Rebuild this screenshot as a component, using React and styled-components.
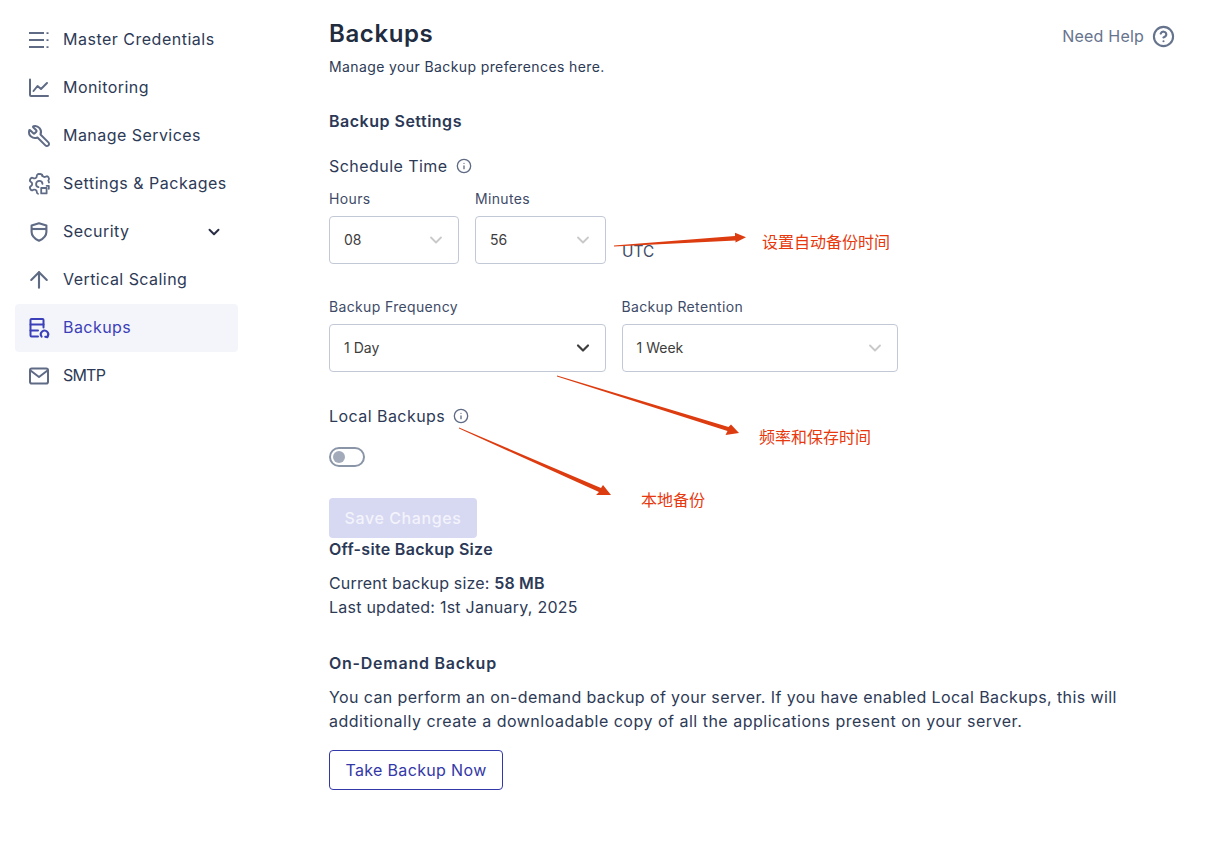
import React from "react";
import styled, { createGlobalStyle } from "styled-components";
import { Wrench, ArrowUp, Info, CircleHelp, ChevronDown } from "lucide-react";

const Global = createGlobalStyle`
  html, body { margin: 0; padding: 0; background: #fff; }
  body { font-family: Inter, "Open Sans", sans-serif; color: #2d3a56; overflow: hidden; }
  * { box-sizing: border-box; }
`;
const Page = styled.div`
  position: relative; display: flex; width: 1206px; height: 846px; overflow: hidden;
`;
const Sidebar = styled.nav`
  width: 329px; flex: none; padding: 16px 91px 0 15px; display: flex; flex-direction: column;
`;
const NavItem = styled.div`
  height: 48px; display: flex; align-items: center; gap: 14px; padding: 0 15px 0 14px; border-radius: 4px;
  font-size: 16px; letter-spacing: ${p => p.$ls ?? 0.45}px;
  background: ${p => (p.$active ? "#f4f5fb" : "transparent")};
  color: ${p => (p.$active ? "#3b3fb8" : "#2d3a56")};
  svg.icon { flex: none; width: 20px; height: 20px; overflow: visible; color: ${p => (p.$active ? "#3b3fb8" : "#5f6b85")}; }
`;
const NavLabel = styled.span`flex: 1; white-space: nowrap; margin-top: -2px;`;
const Main = styled.main`flex: 1; padding: 18px 31px 0 0; display: flex; flex-direction: column; align-items: flex-start;`;
const Header = styled.div`width: 100%; display: flex; justify-content: space-between; align-items: center;`;
const Title = styled.h1`margin: 0; font-size: 24px; line-height: 32px; letter-spacing: 0.6px; font-weight: 600; color: #222c3f;`;
const Help = styled.div`
  display: flex; align-items: center; gap: 8px; font-size: 16px; letter-spacing: 0.2px; color: #66738d; margin-top: 4px;
`;
const Sub = styled.p`margin: 7px 0 0; font-size: 14px; letter-spacing: 0.39px; line-height: 20px; color: #2d3a56;`;
const SectionTitle = styled.h2`
  margin: ${p => p.$mt ?? 32}px 0 0; font-size: 16px; letter-spacing: ${p => p.$ls ?? 0.5}px; line-height: ${p => p.$lh ?? 24}px; font-weight: 600; color: #2b3856;
`;
const FieldHead = styled.div`
  margin-top: ${p => p.$mt}px; display: flex; align-items: center; gap: 8px; font-size: 16px; line-height: 24px; color: #2d3a56; letter-spacing: 0.45px;
  svg { color: #5f6b85; }
`;
const Grid = styled.div`
  width: 569px; display: grid; grid-template-columns: 1fr 1fr; column-gap: 16px; margin-top: ${p => p.$mt ?? 0}px;
`;
const TimeGrid = styled.div`display: grid; grid-template-columns: 130px 131px; column-gap: 16px;`;
const Field = styled.div`min-width: 0;`;
const Label = styled.div`font-size: 14px; letter-spacing: 0.35px; line-height: 20px; color: #3e4b68; margin-bottom: 7px; white-space: nowrap;`;
const Select = styled.div`
  height: 48px; border: 1px solid #c3c8d6; border-radius: 4px; display: flex; align-items: center; justify-content: space-between;
  padding: 0 12px 0 14px; font-size: 14px; color: #3d3d3d; background: #fff;
  svg { color: ${p => (p.$dark ? "#3d3d3d" : "#c9c9c9")}; }
`;
const SelectValue = styled.span`margin-top: -2px;`;
const Utc = styled.div`font-size: 15.4px; line-height: 22px; color: #3e4b68; margin-top: 52px;`;
const Toggle = styled.div`
  margin-top: 19px; width: 36px; height: 20px; border: 2px solid #8b95a8; border-radius: 10px; padding: 2px 0 0 2px;
  &::before { content: ""; display: block; width: 12px; height: 12px; border-radius: 50%; background: #a3abbb; }
`;
const SaveButton = styled.button`
  margin-top: 31px; width: 148px; height: 40px; border: 0; border-radius: 4px; background: #d7d8f2; color: #f3f3fb;
  font: 500 16px Inter, sans-serif; letter-spacing: 0.6px;
`;
const Text = styled.p`margin: ${p => p.$mt ?? 0}px 0 0; font-size: 16px; letter-spacing: ${p => p.$ls ?? 0.4}px; line-height: 24px; color: #2d3a56; b { font-weight: 600; }`;
const OutlineButton = styled.button`
  margin-top: 17px; width: 174px; height: 40px; background: #fff; border: 1px solid #3338a8; border-radius: 4px; color: #3338a8;
  font: 400 16px Inter, sans-serif; letter-spacing: 0.35px;
`;
const Arrows = styled.svg`position: absolute; left: 0; top: 0; pointer-events: none;`;
const Note = styled.span`
  position: absolute; left: ${p => p.$x}px; top: ${p => p.$y}px; font-family: "Noto Sans CJK SC", sans-serif; font-size: 16px; line-height: 20px; color: #e8380d; white-space: nowrap;
`;

const CredIcon = () => (
  <svg className="icon" viewBox="0 0 20 20" fill="none" stroke="currentColor" strokeWidth="2">
    <path d="M0 3h15M0 10h15M0 17h15" />
    <path d="M18.5 2.2v1.7M18.5 9.2v1.7M18.5 16.2v1.7" />
  </svg>
);
const ChartIcon = () => (
  <svg className="icon" viewBox="0 0 20 20" fill="none" stroke="currentColor" strokeWidth="2" strokeLinecap="round" strokeLinejoin="round">
    <path d="M1 1.5V17a1 1 0 0 0 1 1h17" />
    <path d="M4.5 13l4-5 3.5 3 6-6" />
  </svg>
);
const CogIcon = () => (
  <svg className="icon" viewBox="2 2 20 20" fill="none" stroke="currentColor" strokeWidth="1.8" strokeLinecap="round" strokeLinejoin="round">
    <path d="M12.2 2h-.44a2 2 0 0 0-2 2v.18a2 2 0 0 1-1 1.73l-.43.25a2 2 0 0 1-2 0l-.15-.08a2 2 0 0 0-2.73.73l-.22.38a2 2 0 0 0 .73 2.73l.15.1a2 2 0 0 1 1 1.72v.51a2 2 0 0 1-1 1.74l-.15.09a2 2 0 0 0-.73 2.73l.22.38a2 2 0 0 0 2.73.73l.15-.08a2 2 0 0 1 2 0l.43.25a2 2 0 0 1 1 1.73V20a2 2 0 0 0 1.2 1.8M22 10.5l-.7-2.2.2-.2a2 2 0 0 0 .2-2.4l-.2-.4a2 2 0 0 0-2.7-.7l-.2.1a2 2 0 0 1-2 0l-.4-.3a2 2 0 0 1-1-1.7V4a2 2 0 0 0-2-2" />
    <path d="M11.5 15.2a3.2 3.2 0 1 1 4-3.4" />
    <rect x="14.2" y="16" width="5.4" height="5.4" />
    <path d="M19.6 13.8h2.2v3" />
  </svg>
);
const ShieldIcon = () => (
  <svg className="icon" viewBox="0 0 20 20" fill="none" stroke="currentColor" strokeWidth="2.1" strokeLinejoin="round">
    <path d="M10 1.2 2.6 3.6V10c0 4 3 6.8 7.4 8.8 4.4-2 7.4-4.8 7.4-8.8V3.6L10 1.2Z" />
    <path d="M2.6 7h14.8" />
  </svg>
);
const BackupIcon = () => (
  <svg className="icon" viewBox="0 0 20 20" fill="none" stroke="currentColor" strokeWidth="2" strokeLinecap="round" strokeLinejoin="round">
    <path d="M9 18.5H2.5a1 1 0 0 1-1-1V2a1 1 0 0 1 1-1h11a1 1 0 0 1 1 1v7.5" />
    <path d="M1.5 6.5h13M1.5 12.5H9" />
    <path d="M12.6 18.6a3.7 3.7 0 1 1 5.6.3" />
    <path d="M19 16.9l-.6 2.3-2.2-.5" />
  </svg>
);
const MailIcon = () => (
  <svg className="icon" viewBox="0 0 20 20" fill="none" stroke="currentColor" strokeWidth="2" strokeLinejoin="round">
    <rect x="1" y="2.5" width="18" height="15" rx="1.8" />
    <path d="M1.5 4.5 10 11l8.5-6.5" />
  </svg>
);
const items = [
  { label: "Master Credentials", icon: <CredIcon />, ls: 0.5 },
  { label: "Monitoring", icon: <ChartIcon /> },
  { label: "Manage Services", icon: <Wrench className="icon" viewBox="2 2 20 20" strokeWidth={2} style={{ transform: "scaleX(-1)" }} /> },
  { label: "Settings & Packages", icon: <CogIcon />, ls: 0.5 },
  { label: "Security", icon: <ShieldIcon />, more: true },
  { label: "Vertical Scaling", icon: <ArrowUp className="icon" viewBox="3 3 18 18" strokeWidth={1.9} /> },
  { label: "Backups", icon: <BackupIcon />, active: true },
  { label: "SMTP", icon: <MailIcon />, ls: -0.8 },
];

export default function App() {
  return (
    <Page>
      <Global />
      <Sidebar>
        {items.map(it => (
          <NavItem key={it.label} $active={it.active} $ls={it.ls}>
            {it.icon}
            <NavLabel>{it.label}</NavLabel>
            {it.more && <ChevronDown size={18} strokeWidth={2.6} color="#2a2f45" />}
          </NavItem>
        ))}
      </Sidebar>
      <Main>
        <Header>
          <Title>Backups</Title>
          <Help>Need Help <CircleHelp size={23} strokeWidth={2.2} /></Help>
        </Header>
        <Sub>Manage your Backup preferences here.</Sub>
        <SectionTitle>Backup Settings</SectionTitle>
        <FieldHead $mt={21}>Schedule Time <Info size={16} strokeWidth={2} /></FieldHead>
        <Grid $mt={11}>
          <TimeGrid>
            <Field>
              <Label>Hours</Label>
              <Select><SelectValue>08</SelectValue><ChevronDown size={20} strokeWidth={2.2} /></Select>
            </Field>
            <Field>
              <Label>Minutes</Label>
              <Select><SelectValue>56</SelectValue><ChevronDown size={20} strokeWidth={2.2} /></Select>
            </Field>
          </TimeGrid>
          <Utc>UTC</Utc>
        </Grid>
        <Grid $mt={33}>
          <Field>
            <Label>Backup Frequency</Label>
            <Select $dark><SelectValue>1 Day</SelectValue><ChevronDown size={20} strokeWidth={2.6} /></Select>
          </Field>
          <Field>
            <Label>Backup Retention</Label>
            <Select><SelectValue>1 Week</SelectValue><ChevronDown size={20} strokeWidth={2.2} /></Select>
          </Field>
        </Grid>
        <FieldHead $mt={32}>Local Backups <Info size={16} strokeWidth={2} /></FieldHead>
        <Toggle />
        <SaveButton disabled>Save Changes</SaveButton>
        <SectionTitle $mt={0} $lh={22} $ls={0.3}>Off-site Backup Size</SectionTitle>
        <Text $mt={11} $ls={0.17}>Current backup size: <b>58 MB</b></Text>
        <Text $ls={0.24}>Last updated: 1st January, 2025</Text>
        <SectionTitle $ls={0.75}>On-Demand Backup</SectionTitle>
        <Text $mt={10}>You can perform an on-demand backup of your server. If you have enabled Local Backups, this will</Text>
        <Text $ls={0.5}>additionally create a downloadable copy of all the applications present on your server.</Text>
        <OutlineButton>Take Backup Now</OutlineButton>
      </Main>
      <Arrows width="1206" height="846" viewBox="0 0 1206 846">
        <g fill="#dd3c10">
          <path d="M614 245.5 L735 236 L735 232.7 L746 237.3 L735.5 242.5 L735.5 240.5 L614 246.5 Z" />
          <path d="M557 375.6 L728.5 427 L731 424.5 L739 433 L725.5 435 L727.5 431 L557 376.6 Z" />
          <path d="M459 427.6 L601 488 L603 485 L611 495 L596 495 L599 492 L459 428.6 Z" />
        </g>
      </Arrows>
      <Note $x={762} $y={231}>设置自动备份时间</Note>
      <Note $x={759} $y={426}>频率和保存时间</Note>
      <Note $x={641} $y={489}>本地备份</Note>
    </Page>
  );
}
